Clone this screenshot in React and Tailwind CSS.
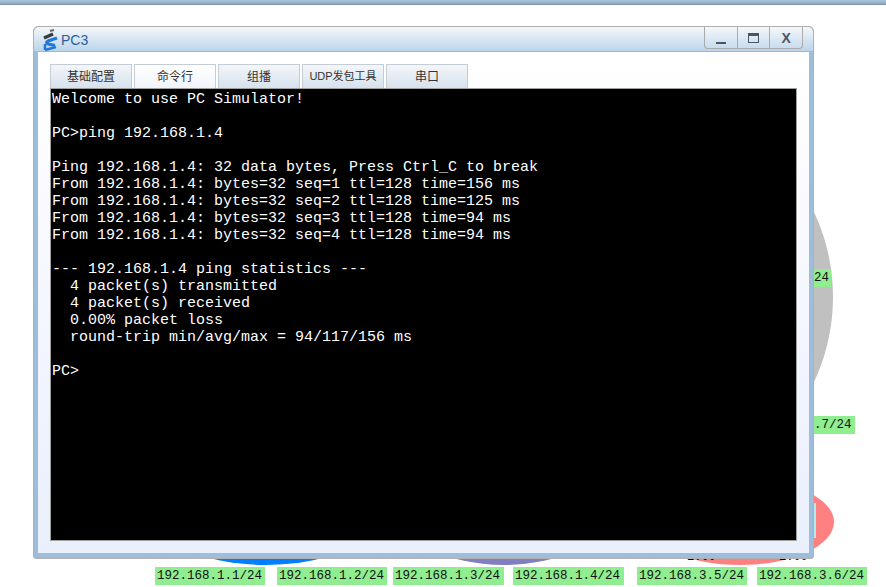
import React from 'react';

const tabs = ['基础配置', '命令行', '组播', 'UDP发包工具', '串口'];

const lines = [
  'Welcome to use PC Simulator!',
  '',
  'PC>ping 192.168.1.4',
  '',
  'Ping 192.168.1.4: 32 data bytes, Press Ctrl_C to break',
  'From 192.168.1.4: bytes=32 seq=1 ttl=128 time=156 ms',
  'From 192.168.1.4: bytes=32 seq=2 ttl=128 time=125 ms',
  'From 192.168.1.4: bytes=32 seq=3 ttl=128 time=94 ms',
  'From 192.168.1.4: bytes=32 seq=4 ttl=128 time=94 ms',
  '',
  '--- 192.168.1.4 ping statistics ---',
  '  4 packet(s) transmitted',
  '  4 packet(s) received',
  '  0.00% packet loss',
  '  round-trip min/avg/max = 94/117/156 ms',
  '',
  'PC>',
];

const Label = ({ className, children }) => (
  <div className={`absolute h-[18px] bg-[#90ee90] font-['Liberation_Mono',monospace] text-[12.5px] leading-[18px] text-[#111] whitespace-nowrap ${className}`}>
    {children}
  </div>
);

const PcIcon = () => (
  <svg width="20" height="22" viewBox="0 0 20 22" className="shrink-0">
    <path d="M4 9 L13 5" stroke="#3a3a3a" strokeWidth="3.5" fill="none" />
    <path d="M10 2 L14 1" stroke="#666" strokeWidth="2" fill="none" />
    <path d="M17 9 L8 12 Q5 13.5 8 15 L15 16.5" stroke="#1e78d8" strokeWidth="3" fill="none" />
    <path d="M16 18 L5 21 M5 15 L5 21" stroke="#1e78d8" strokeWidth="2.5" fill="none" />
  </svg>
);

const App = () => {
  return (
    <div className="relative w-[886px] h-[587px] overflow-hidden bg-white font-['Liberation_Sans','Noto_Sans_CJK_SC',sans-serif]">
      {/* top strip of the app behind */}
      <div className="h-[5px] bg-gradient-to-b from-[#a9c6de] to-[#8fa8bd] border-b border-[#7f93a6]" />

      {/* ellipses of the topology behind the window */}
      <div className="absolute left-[433px] top-[97px] w-[400px] h-[400px] rounded-full bg-[#c0c0c0]" />
      <div className="absolute left-[646px] top-[479px] w-[188px] h-[86px] rounded-[50%] bg-[#ff8080]" />
      <div className="absolute left-[146px] top-[445px] w-[240px] h-[120px] rounded-[50%] bg-[#0080ff]" />
      <div className="absolute left-[394px] top-[443px] w-[220px] h-[122px] rounded-[50%] bg-[#8080c0]" />
      <div className="absolute left-[814px] top-[503px] w-[2px] h-[35px] bg-[#aeeeee]" />

      {/* port text mostly hidden by the window */}
      <div className="absolute left-[687px] top-[551px] font-['Liberation_Mono',monospace] text-[12px] leading-[12px] text-black">1.00</div>
      <div className="absolute left-[779px] top-[551px] font-['Liberation_Mono',monospace] text-[12px] leading-[12px] text-black">1.00</div>

      <Label className="left-[155px] top-[567px] w-[110px] pl-[2px]">192.168.1.1/24</Label>
      <Label className="left-[277px] top-[567px] w-[110px] pl-[2px]">192.168.1.2/24</Label>
      <Label className="left-[393px] top-[567px] w-[111px] pl-[2px]">192.168.1.3/24</Label>
      <Label className="left-[513px] top-[567px] w-[111px] pl-[2px]">192.168.1.4/24</Label>
      <Label className="left-[637px] top-[567px] w-[110px] pl-[2px]">192.168.3.5/24</Label>
      <Label className="left-[757px] top-[567px] w-[110px] pl-[2px]">192.168.3.6/24</Label>
      <Label className="left-[800px] top-[269px] w-[31px] pl-[14px]">24</Label>
      <Label className="left-[800px] top-[416px] w-[55px] pl-[14px]">.7/24</Label>

      {/* PC3 window */}
      <div className="absolute left-[33px] top-[26px] w-[781px] h-[533px] flex flex-col rounded-t-[5px] rounded-b-[3px] border border-[#b0b0b0] bg-[#9dbdd8]">
        <div className="relative h-[24px] shrink-0 flex items-center gap-[1px] pl-[6px] pt-[2px] rounded-t-[5px] bg-gradient-to-b from-[#f3f7fb] to-[#bcd5ea]">
          <PcIcon />
          <span className="text-[14px] text-[#2a5f9a]">PC3</span>
          <div className="absolute right-[10px] top-0 w-[99px] h-[22px] flex rounded-b-[4px] border border-t-0 border-[#aaaaaa] bg-gradient-to-b from-[#f4f7fb] to-[#c8dcee]">
            <div className="flex-1 flex items-end justify-center pb-[4px] border-r border-[#aaaaaa]">
              <div className="w-[10px] h-[2px] bg-[#4c5661]" />
            </div>
            <div className="flex-1 flex items-center justify-center border-r border-[#aaaaaa]">
              <div className="w-[11px] h-[10px] border border-t-[3px] border-[#4c5661]" />
            </div>
            <div className="flex-1 flex items-center justify-center text-[14px] leading-none font-bold text-[#4c5661]">X</div>
          </div>
        </div>
        <div className="ml-[4px] mr-[4px] mb-[5px] flex-1 flex flex-col pl-[12px] pr-[12px] pt-[12px] pb-[12px] border-t border-[#a9b4bf] bg-gradient-to-b from-white to-[#e9effc]">
          <div className="flex gap-[2px] h-[24px] shrink-0">
            {tabs.map((t, i) => (
              <div
                key={t}
                className={`w-[82px] flex items-center justify-center border border-b-0 border-[#c4cdd6] whitespace-nowrap ${i === 1 ? 'bg-gradient-to-b from-white to-[#f0f5fb]' : 'bg-gradient-to-b from-[#f4f6f9] to-[#d6e2ee]'} ${i === 3 ? 'text-[11px]' : 'text-[12px]'} text-[#333]`}
              >
                {t}
              </div>
            ))}
          </div>
          <div className="flex-1 bg-black border border-[#a0a0a0] pl-[1px] pt-[2px] font-['Liberation_Mono',monospace] text-[15px] leading-[17px] text-white whitespace-pre overflow-hidden">
            {lines.map((l, i) => (
              <div key={i} className="h-[17px]">{l}</div>
            ))}
          </div>
        </div>
      </div>
    </div>
  );
};

export default App;
